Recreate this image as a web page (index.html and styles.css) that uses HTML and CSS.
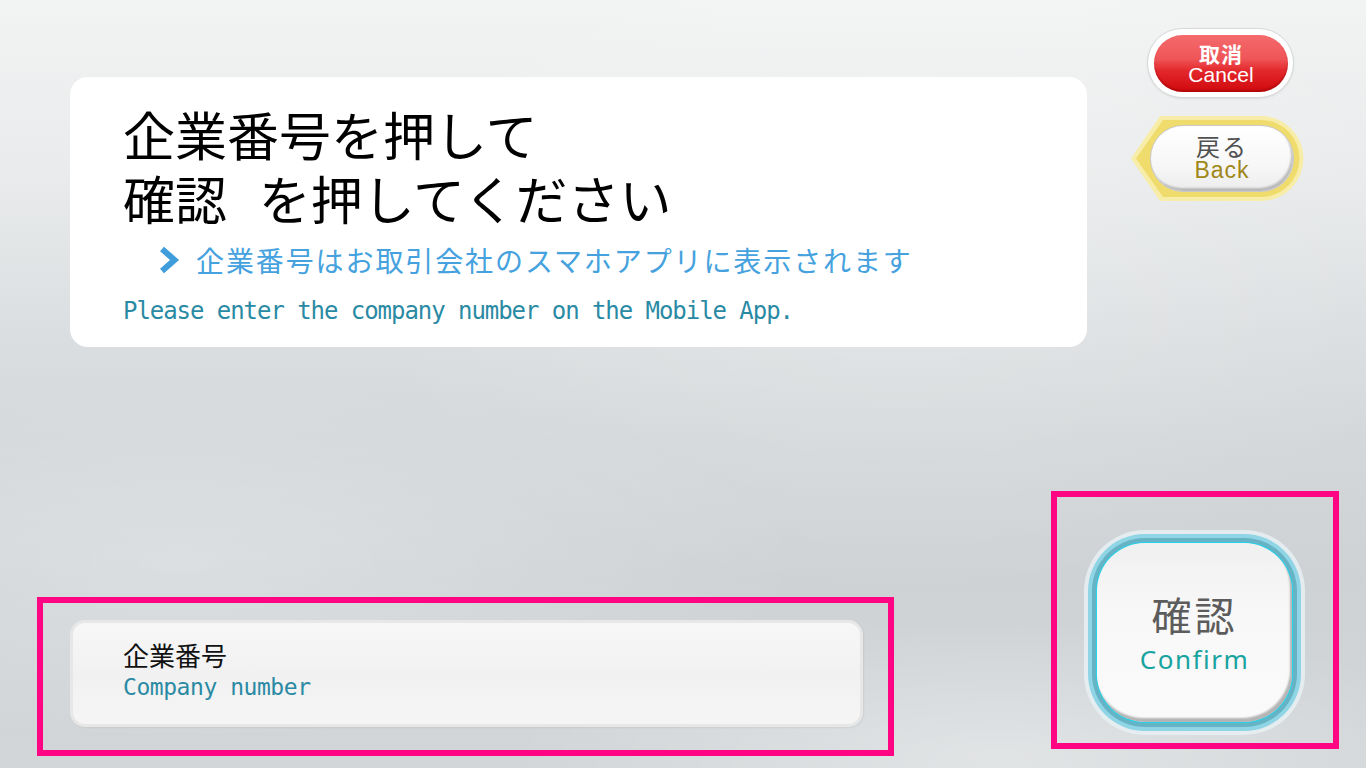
FILE: index.html
```html
<!DOCTYPE html>
<html lang="ja">
<head>
<meta charset="utf-8">
<title>企業番号入力</title>
<link rel="stylesheet" href="styles.css">
</head>
<body>
<div class="screen">
  <div class="top">
    <section class="card">
      <h1 class="title">
        <span class="line">企業番号を押して</span>
        <span class="line gapline">確認 を押してください</span>
      </h1>
      <p class="hint">
        <svg class="chev" width="22" height="28" viewBox="0 0 22 28"><polyline points="4,3 16.5,14 4,25" fill="none" stroke="#3f9ddb" stroke-width="6" stroke-linejoin="miter"/></svg>
        <span>企業番号はお取引会社のスマホアプリに表示されます</span>
      </p>
      <p class="en">Please enter the company number on the Mobile App.</p>
    </section>
    <div class="side">
      <div class="cancel">
        <div class="cancel-in">
          <span class="jp">取消</span>
          <span class="en-s">Cancel</span>
        </div>
      </div>
      <div class="back">
        <svg class="back-shape" width="174" height="87" viewBox="0 0 174 87">
          <path d="M1 43.5 L30 1 H131 A42.5 42.5 0 0 1 131 86 H30 Z" fill="#f7eda9"/>
          <path d="M6 43.5 L33 5 H131 A38.5 38.5 0 0 1 131 82 H33 Z" fill="#f0dc6c"/>
        </svg>
        <div class="back-in">
          <span class="jp">戻る</span>
          <span class="en-b">Back</span>
        </div>
      </div>
    </div>
  </div>
  <div class="bottom">
    <div class="mark mark-input">
      <div class="field">
        <span class="field-jp">企業番号</span>
        <span class="field-en">Company number</span>
      </div>
    </div>
    <div class="mark mark-confirm">
      <div class="confirm">
        <span class="c-jp">確認</span>
        <span class="c-en">Confirm</span>
      </div>
    </div>
  </div>
</div>
</body>
</html>
```
FILE: styles.css
```css
* { box-sizing: border-box; }
html, body { margin: 0; padding: 0; }
body {
  width: 1366px;
  height: 768px;
  overflow: hidden;
  font-family: "Noto Sans CJK JP", "Noto Sans", sans-serif;
  background:
    radial-gradient(ellipse 900px 260px at 180px 560px, rgba(255,255,255,0.28), rgba(255,255,255,0) 70%),
    radial-gradient(ellipse 700px 200px at 1000px 760px, rgba(255,255,255,0.35), rgba(255,255,255,0) 70%),
    radial-gradient(ellipse 800px 500px at 900px 250px, rgba(255,255,255,0.22), rgba(255,255,255,0) 70%),
    linear-gradient(180deg, #f2f3f3 0%, #e9ebec 22%, #dcdfe1 42%, #d3d7d9 58%, #ced2d5 75%, #d2d6d8 100%);
}
.screen {
  height: 768px;
  display: flex;
  flex-direction: column;
}
.top {
  display: flex;
  align-items: flex-start;
}
.card {
  margin: 77px 0 0 70px;
  width: 1017px;
  height: 270px;
  background: #fff;
  border-radius: 18px;
  padding: 25px 0 0 53px;
}
.title {
  margin: 0;
  font-weight: 400;
  font-size: 52px;
  line-height: 64px;
  color: #000;
}
.title .line { display: block; }
.gapline { word-spacing: 20px; }
.hint {
  margin: 10px 0 0 35px;
  display: flex;
  align-items: center;
  height: 40px;
  font-size: 28px;
  letter-spacing: 1.9px;
  color: #45a2de;
}
.chev { margin-right: 16px; flex: none; }
.en {
  margin: 16px 0 0 0;
  font-family: "DejaVu Sans Mono", monospace;
  font-size: 24px;
  line-height: 30px;
  letter-spacing: -1.05px;
  color: #2a8aa4;
}
.side {
  margin: 28px 0 0 43px;
  display: flex;
  flex-direction: column;
  align-items: flex-start;
}
.cancel {
  margin-left: 17px;
  width: 147px;
  height: 70px;
  border-radius: 35px;
  background: #fff;
  border: 1px solid #d6d8da;
  padding: 6px 5px 5px 6px;
  box-shadow: 0 1px 2px rgba(0,0,0,0.08);
}
.cancel-in {
  height: 100%;
  border-radius: 30px;
  background: linear-gradient(180deg, #f46a6d 0%, #ef5558 42%, #e3292d 62%, #d0080c 100%);
  box-shadow: inset 0 -2px 2px rgba(120,0,0,0.35);
  display: flex;
  flex-direction: column;
  align-items: center;
  justify-content: center;
  color: #fff;
}
.cancel-in .jp {
  font-size: 21px;
  line-height: 22px;
  font-weight: 700;
  letter-spacing: 1px;
}
.cancel-in .en-s {
  font-family: "Liberation Sans", "Noto Sans", sans-serif;
  font-size: 21px;
  line-height: 22px;
}
.back {
  position: relative;
  margin-top: 17px;
  width: 174px;
  height: 87px;
  padding: 10px 10px 10px 20px;
}
.back-shape {
  position: absolute;
  left: 0;
  top: 0;
}
.back-in {
  position: relative;
  height: 100%;
  border-radius: 33px;
  background: linear-gradient(180deg, #ffffff 0%, #f7f7f7 60%, #ececec 100%);
  border: 1px solid #c9c9c9;
  box-shadow: inset -2px -3px 2px rgba(0,0,0,0.22);
  display: flex;
  flex-direction: column;
  align-items: center;
  justify-content: center;
  padding-bottom: 2px;
}
.back-in .jp {
  font-size: 24px;
  line-height: 24px;
  letter-spacing: 2px;
  color: #505050;
}
.back-in .en-b {
  font-family: "Liberation Sans", "Noto Sans", sans-serif;
  font-size: 23px;
  line-height: 24px;
  color: #a08818;
  letter-spacing: 1px;
}
.bottom {
  margin-top: auto;
  display: flex;
  align-items: flex-end;
}
.mark {
  border: 6px solid #ff0584;
}
.mark-input {
  margin: 0 0 12px 37px;
  width: 857px;
  height: 159px;
  padding: 17px 0 0 27px;
}
.field {
  width: 793px;
  height: 107px;
  border-radius: 15px;
  border: 3px solid #e7e7e7;
  background: linear-gradient(180deg, #f7f7f7 0%, #f1f1f1 50%, #f5f5f5 100%);
  box-shadow: 1px 1px 2px rgba(0,0,0,0.06);
  padding: 16px 0 0 50px;
  display: flex;
  flex-direction: column;
}
.field-jp {
  font-size: 26px;
  line-height: 32px;
  color: #111;
}
.field-en {
  margin-top: 1px;
  font-family: "DejaVu Sans Mono", monospace;
  font-size: 23px;
  line-height: 30px;
  letter-spacing: -0.45px;
  color: #2a8aa4;
}
.mark-confirm {
  margin: 0 0 19px 157px;
  width: 288px;
  height: 258px;
  padding: 46px 0 0 40px;
}
.confirm {
  width: 195px;
  height: 179px;
  border-radius: 48px;
  background: linear-gradient(180deg, #f0f0f0 0%, #f8f8f8 40%, #fafafa 100%);
  box-shadow:
    inset -2px -4px 2px rgba(0,0,0,0.28),
    0 0 0 1px #22d6ee,
    0 0 0 5px #65b3c4,
    0 0 0 9px #8fd5e5,
    0 0 0 13px rgba(232,240,243,0.85);
  display: flex;
  flex-direction: column;
  align-items: center;
  justify-content: center;
  padding-bottom: 2px;
}
.c-jp {
  font-size: 40px;
  line-height: 48px;
  letter-spacing: 3px;
  color: #5c5c5c;
}
.c-en {
  margin-top: 6px;
  font-family: "Noto Sans", sans-serif;
  font-size: 26px;
  line-height: 30px;
  letter-spacing: 1.5px;
  color: #17a39f;
}
```
